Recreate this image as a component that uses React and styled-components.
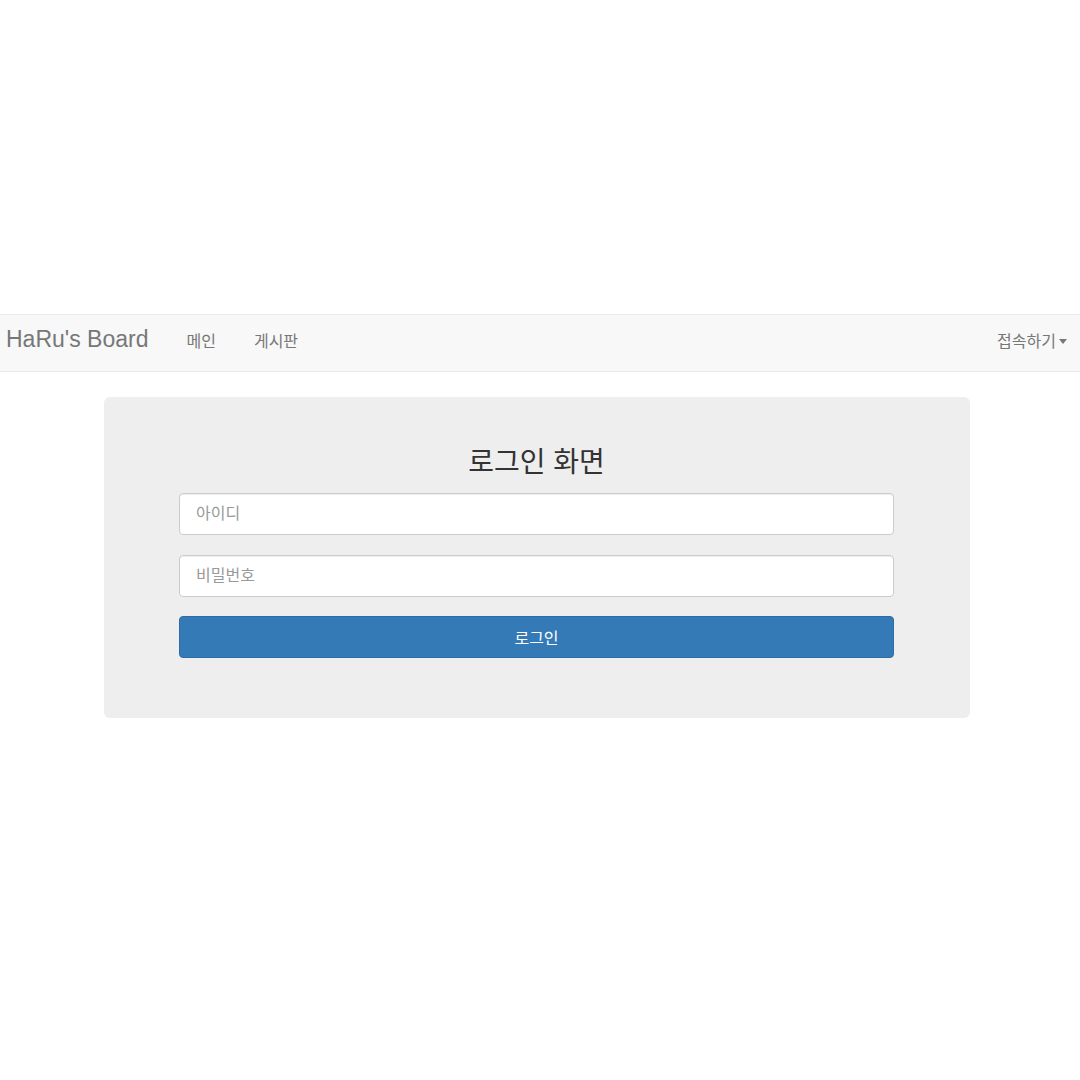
import React from 'react';
import styled, { createGlobalStyle } from 'styled-components';

const GlobalStyle = createGlobalStyle`
  body {
    margin: 0;
    background: #fff;
    font-family: "Liberation Sans", "Noto Sans CJK KR", sans-serif;
    color: #333;
  }
`;

const Page = styled.div`
  padding-top: 314px;
  min-height: 1080px;
  box-sizing: border-box;
`;

const Navbar = styled.header`
  display: flex;
  align-items: center;
  height: 58px;
  padding: 0 13px 7px 6px;
  box-sizing: border-box;
  background-color: #f8f8f8;
  border-top: 1px solid #ececec;
  border-bottom: 1px solid #e7e7e7;
`;

const Brand = styled.a`
  color: #777;
  font-size: 23px;
  text-decoration: none;
  margin-right: 19px;
`;

const NavLink = styled.a`
  color: #777;
  font-size: 16px;
  text-decoration: none;
  padding: 0 19px;
`;

const Spacer = styled.div`
  flex: 1;
`;

const Dropdown = styled.a`
  display: flex;
  align-items: center;
  color: #777;
  font-size: 16px;
  text-decoration: none;
`;

const Caret = styled.span`
  display: inline-block;
  margin-left: 3px;
  margin-top: 3px;
  border-top: 5px solid #777;
  border-left: 4.5px solid transparent;
  border-right: 4.5px solid transparent;
`;

const Jumbotron = styled.section`
  width: 866px;
  margin: 25px 0 0 104px;
  padding: 48px 76px 60px 75px;
  box-sizing: border-box;
  background: #eee;
  border-radius: 6px;
  display: flex;
  flex-direction: column;
  gap: 20px;
`;

const Title = styled.h2`
  margin: 0 0 -8px;
  text-align: center;
  font-size: 28px;
  font-weight: 400;
  line-height: 36px;
  color: #333;
`;

const Input = styled.input`
  height: 42px;
  padding: 0 16px;
  box-sizing: border-box;
  border: 1px solid #ccc;
  border-radius: 4px;
  background: #fff;
  font-family: inherit;
  font-size: 16px;
  color: #555;
  box-shadow: inset 0 1px 1px rgba(0, 0, 0, 0.075);

  &::placeholder {
    color: #999;
  }
`;

const Button = styled.button`
  height: 42px;
  margin-top: -1px;
  border: 1px solid #2e6da4;
  border-radius: 4px;
  background: #337ab7;
  color: #fff;
  font-family: inherit;
  font-size: 16px;
  cursor: pointer;
`;

const App = () => {
  return (
    <Page>
      <GlobalStyle />
      <Navbar>
        <Brand href="#">HaRu's Board</Brand>
        <NavLink href="#">메인</NavLink>
        <NavLink href="#">게시판</NavLink>
        <Spacer />
        <Dropdown href="#">
          접속하기<Caret />
        </Dropdown>
      </Navbar>
      <Jumbotron>
        <Title>로그인 화면</Title>
        <Input type="text" placeholder="아이디" />
        <Input type="password" placeholder="비밀번호" />
        <Button type="button">로그인</Button>
      </Jumbotron>
    </Page>
  );
};

export default App;
